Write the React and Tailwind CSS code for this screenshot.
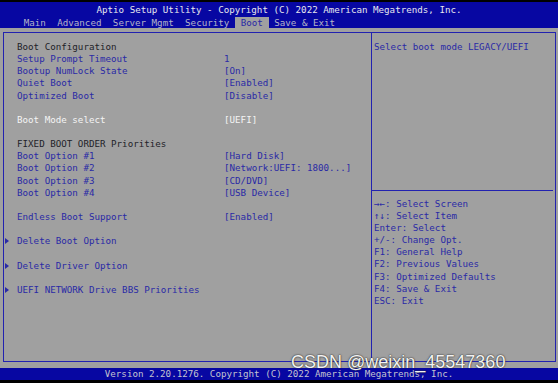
import React from "react";

const mono = { fontFamily: '"DejaVu Sans Mono", "Liberation Mono", monospace' };

const rows = [
  { l: "Boot Configuration", c: "dark" },
  { l: "Setup Prompt Timeout", v: "1" },
  { l: "Bootup NumLock State", v: "[On]" },
  { l: "Quiet Boot", v: "[Enabled]" },
  { l: "Optimized Boot", v: "[Disable]" },
  {},
  { l: "Boot Mode select", v: "[UEFI]", c: "white" },
  {},
  { l: "FIXED BOOT ORDER Priorities", c: "dark" },
  { l: "Boot Option #1", v: "[Hard Disk]" },
  { l: "Boot Option #2", v: "[Network:UEFI: 1800...]" },
  { l: "Boot Option #3", v: "[CD/DVD]" },
  { l: "Boot Option #4", v: "[USB Device]" },
  {},
  { l: "Endless Boot Support", v: "[Enabled]" },
  {},
  { l: "Delete Boot Option", a: true },
  {},
  { l: "Delete Driver Option", a: true },
  {},
  { l: "UEFI NETWORK Drive BBS Priorities", a: true },
];

const help = [
  "\u2192\u2190: Select Screen",
  "\u2191\u2193: Select Item",
  "Enter: Select",
  "+/-: Change Opt.",
  "F1: General Help",
  "F2: Previous Values",
  "F3: Optimized Defaults",
  "F4: Save & Exit",
  "ESC: Exit",
];

const tabs = ["Main", "Advanced", "Server Mgmt", "Security", "Boot", "Save & Exit"];

function Row({ r }) {
  const color =
    r.c === "dark" ? "text-[#222228]" : r.c === "white" ? "text-[#f4f4f4]" : "text-[#2a2aa6]";
  return (
    <div className="flex h-[12.15px] leading-[12.15px] whitespace-pre">
      <div className="w-[13px] flex items-center">
        {r.a && (
          <svg width="4" height="6" viewBox="0 0 4 6" className="ml-[1px]">
            <polygon points="0,0 4,3 0,6" fill="#2a2aa6" />
          </svg>
        )}
      </div>
      <div className={`w-[207px] ${color}`}>{r.l || ""}</div>
      <div className={color}>{r.v || ""}</div>
    </div>
  );
}

export default function App() {
  return (
    <div
      className="relative w-[558px] h-[383px] bg-black flex flex-col overflow-hidden text-[9.2px]"
      style={mono}
    >
      <div className="h-[2px] bg-black" />
      <div className="h-[26px] bg-[#0707a2] flex flex-col">
        <div className="mt-[2px] h-[12px] leading-[12px] text-center text-[#e6e6ee] whitespace-pre">
          Aptio Setup Utility - Copyright (C) 2022 American Megatrends, Inc.
        </div>
        <div className="mt-[1px] h-[11px] leading-[11px] flex pl-[18px] whitespace-pre">
          {tabs.map((t) => (
            <span
              key={t}
              className={
                t === "Boot"
                  ? "bg-[#a0a0a0] text-[#2a2aa6] px-[5.7px]"
                  : "text-[#b4b4c8] px-[5.7px]"
              }
            >
              {t}
            </span>
          ))}
        </div>
      </div>
      <div className="h-[340px] bg-[#a0a0a0] pt-[4px] pl-[3px] pr-[2px]">
        <div className="h-[330px] border border-[#2222b0] flex">
          <div className="w-[368px] pt-[8px] border-r border-[#2222b0]">
            {rows.map((r, i) => (
              <Row key={i} r={r} />
            ))}
          </div>
          <div className="flex-1 flex flex-col">
            <div className="h-[157px] pt-[8px] pl-[2px] leading-[12.15px] text-[#2a2aa6] whitespace-pre">
              Select boot mode LEGACY/UEFI
            </div>
            <div className="h-px bg-[#2222b0] mr-[2px]" />
            <div className="pt-[7px] pl-[2px] text-[#2a2aa6] whitespace-pre">
              {help.map((h) => (
                <div key={h} className="h-[12.1px] leading-[12.1px]">
                  {h}
                </div>
              ))}
            </div>
          </div>
        </div>
      </div>
      <div className="h-[12px] bg-[#0707a2] leading-[12px] text-center text-[#c4c4d0] whitespace-pre">
        Version 2.20.1276. Copyright (C) 2022 American Megatrends, Inc.
      </div>
      <div className="flex-1 bg-black" />
      <div
        className="absolute left-[291px] top-[351px] text-[18px] leading-[22px] text-[#f2f2f2] [text-shadow:0_0_2px_#333,0_0_1px_#333]"
        style={{ fontFamily: '"Liberation Sans", Arial, sans-serif' }}
      >
        CSDN @weixin_45547360
      </div>
    </div>
  );
}
